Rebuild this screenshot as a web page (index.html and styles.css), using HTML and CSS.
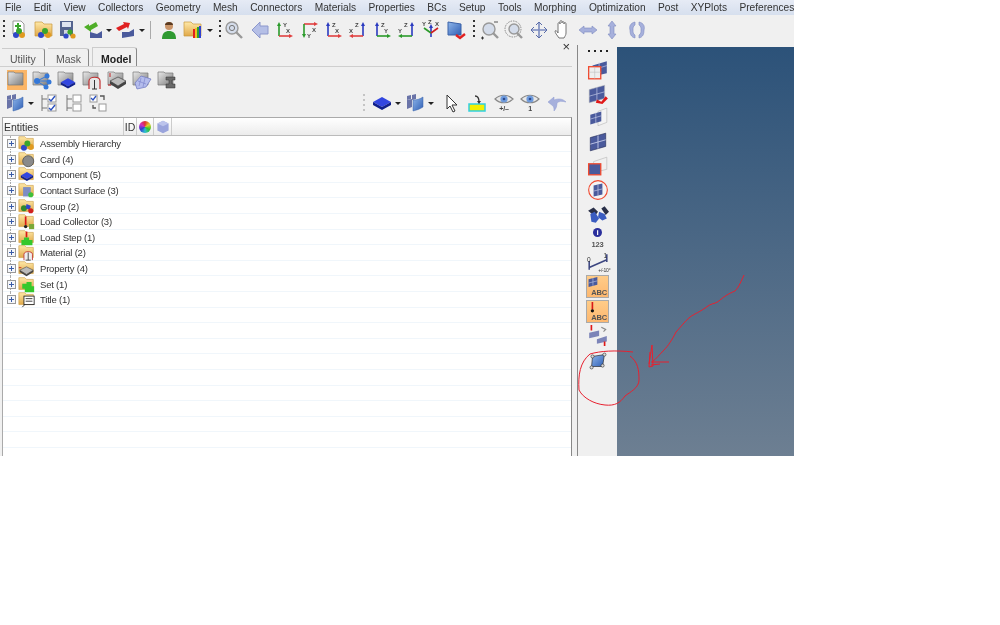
FILE: index.html
```html
<!DOCTYPE html>
<html lang="en">
<head>
    <meta charset="UTF-8">
    <title>HyperMesh</title>
    <link rel="stylesheet" href="styles.css">
</head>
<body>
<svg class="defs" width="0" height="0">
    <defs>
        <linearGradient id="fold" x1="0" y1="0" x2="0" y2="1"><stop offset="0" stop-color="#ffe9a8"/><stop offset="1" stop-color="#e0a848"/></linearGradient>
        <linearGradient id="gfold" x1="0" y1="0" x2="1" y2="1"><stop offset="0" stop-color="#eaeaea"/><stop offset="1" stop-color="#7c7c7c"/></linearGradient>
        <linearGradient id="blue" x1="0" y1="0" x2="1" y2="1"><stop offset="0" stop-color="#8fb6ea"/><stop offset="1" stop-color="#2f5fb5"/></linearGradient>
        <symbol id="folder" viewBox="0 0 20 20"><path d="M1 2h7l2 2h8v12H1z" fill="url(#fold)" stroke="#c99a3c" stroke-width=".7"/></symbol>
        <symbol id="gray" viewBox="0 0 20 20"><path d="M1 2h6l1 1h8v12H1z" fill="url(#gfold)" stroke="#777" stroke-width=".7"/></symbol>
        <symbol id="mesh" viewBox="0 0 20 20"><path d="M3 6l14-4v12L3 18z" fill="#4a5a9c" stroke="#26305c" stroke-width=".6"/><path d="M3 12l14-4M10 4v12" stroke="#c7cdea" stroke-width=".8"/></symbol>
        <symbol id="cube" viewBox="0 0 20 20"><path d="M10 4l9 5-9 5-9-5z" fill="#3246e0"/><path d="M1 9v3l9 5 9-5V9l-9 5z" fill="#10208c"/></symbol>
        <symbol id="panel" viewBox="0 0 20 20"><path d="M2 7l5-1v8l-5 2z" fill="#6a74a8"/><path d="M7 2l4-1v5l-4 1z" fill="#6a74a8"/><path d="M2 3l4-1v4l-4 1z" fill="#6a74a8"/><path d="M8 7c4 0 7-1 10-3v10c-3 2-6 3-10 4z" fill="url(#blue)" stroke="#3b62a8" stroke-width=".5"/></symbol>
        <symbol id="tree-on" viewBox="0 0 20 20"><path d="M4 2v16M4 6h5M4 15h5" fill="none" stroke="#777"/><rect x="10" y="2" width="8" height="7" fill="#fff" stroke="#999"/><rect x="10" y="11" width="8" height="7" fill="#fff" stroke="#999"/><path d="M11 6l2 2 4-5M11 15l2 2 4-5" fill="none" stroke="#2a50c0" stroke-width="1.4"/></symbol>
        <symbol id="tree-off" viewBox="0 0 20 20"><path d="M4 2v16M4 6h5M4 15h5" fill="none" stroke="#777"/><rect x="10" y="2" width="8" height="7" fill="#fff" stroke="#999"/><rect x="10" y="11" width="8" height="7" fill="#fff" stroke="#999"/></symbol>
        <symbol id="eye" viewBox="0 0 20 20"><path d="M1 6c5-5 13-5 18 0-5 5-13 5-18 0z" fill="#e8e8e8" stroke="#888" stroke-width="1.2"/><circle cx="10" cy="6" r="3.6" fill="#6f9bdc"/><circle cx="10" cy="6" r="1.3" fill="#2b4a90"/></symbol>
    </defs>
</svg>

<div class="app">
    <nav class="menubar">
        <span>File</span><span>Edit</span><span>View</span><span>Collectors</span><span>Geometry</span><span>Mesh</span><span>Connectors</span><span>Materials</span><span>Properties</span><span>BCs</span><span>Setup</span><span>Tools</span><span>Morphing</span><span>Optimization</span><span>Post</span><span>XYPlots</span><span>Preferences</span>
    </nav>

    <div class="toolbar">
        <i class="grip"></i>
        <div class="tool"><svg viewBox="0 0 20 20"><path d="M4 1h8l3 3v10H4z" fill="#fff" stroke="#999"/><path d="M8 3h2v2h2v2h-2v2H8V7H6V5h2z" fill="#3aa52c"/><circle cx="7" cy="15" r="3" fill="#2f47c8"/><circle cx="13" cy="15" r="3" fill="#e09a20"/><circle cx="10" cy="11" r="3" fill="#3aa52c"/></svg></div>
        <div class="tool"><svg viewBox="0 0 20 20"><use href="#folder"/><circle cx="7" cy="15" r="3" fill="#2f47c8"/><circle cx="14" cy="15" r="3" fill="#e09a20"/><circle cx="11" cy="11" r="3" fill="#3aa52c"/></svg></div>
        <div class="tool"><svg viewBox="0 0 20 20"><path d="M2 1h13v15H2z" fill="#55648f"/><rect x="4" y="2" width="9" height="5" fill="#dfe4f0"/><rect x="6" y="10" width="6" height="6" fill="#cfd4e0"/><circle cx="8" cy="16" r="2.6" fill="#2f47c8"/><circle cx="15" cy="16" r="2.6" fill="#e09a20"/><circle cx="12" cy="12" r="2.6" fill="#3aa52c"/></svg></div>
        <div class="tool"><svg viewBox="0 0 20 20"><path d="M7 12l7 2 5-3v7H7z" fill="#4a5a9c"/><path d="M1 7l5-3v2l7-4 2 4-7 4v2z" fill="#4fae28"/></svg></div>
        <i class="caret"></i>
        <div class="tool"><svg viewBox="0 0 20 20"><path d="M7 12l7 0 5-3v7l-12 2z" fill="#4a5a9c"/><path d="M1 8l8-4-1-2 7 1-2 6-1-2-8 4z" fill="#e02020"/></svg></div>
        <i class="caret"></i>
        <i class="sep"></i>
        <div class="tool"><svg viewBox="0 0 20 20"><circle cx="10" cy="6" r="4" fill="#c99468"/><path d="M6 5c0-4 8-4 8 0z" fill="#5a3a20"/><path d="M3 19c0-6 3-8 7-8s7 2 7 8z" fill="#2f9a32"/></svg></div>
        <div class="tool"><svg viewBox="0 0 20 20"><use href="#folder"/><path d="M10 9h2v9h-2z" fill="#e02020"/><path d="M12 8h2v10h-2z" fill="#f0c020"/><path d="M14 7h2v11h-2z" fill="#30a030"/><path d="M16 6h2v12h-2z" fill="#3040d0"/></svg></div>
        <i class="caret"></i>
        <i class="grip g2"></i>
        <div class="tool"><svg viewBox="0 0 20 20"><circle cx="8" cy="8" r="6" fill="#d4dcea" stroke="#999" stroke-width="1.4"/><circle cx="8" cy="8" r="2.6" fill="none" stroke="#777"/><path d="M12 12l6 6" stroke="#999" stroke-width="2.4"/></svg></div>
        <div class="tool nudge"><svg viewBox="0 0 20 20"><path d="M2 10l8-8v4h8v8h-8v4z" fill="#b5bfe6" stroke="#8c97cc"/></svg></div>
        <div class="tool"><svg viewBox="0 0 20 20"><path d="M5 4v12" stroke="#2a9a2a" stroke-width="1.6"/><path d="M5 16h12" stroke="#e04040" stroke-width="1.6"/><path d="M3 6l2-4 2 4z" fill="#2a9a2a"/><path d="M15 14l4 2-4 2z" fill="#e04040"/><text x="9" y="7" class="ax-l">Y</text><text x="12" y="13" class="ax-l">X</text></svg></div>
        <div class="tool"><svg viewBox="0 0 20 20"><path d="M5 4h12" stroke="#e04040" stroke-width="1.6"/><path d="M5 4v12" stroke="#2a9a2a" stroke-width="1.6"/><path d="M15 2l4 2-4 2z" fill="#e04040"/><path d="M3 14l2 4 2-4z" fill="#2a9a2a"/><text x="8" y="18" class="ax-l">Y</text><text x="13" y="12" class="ax-l">X</text></svg></div>
        <div class="tool"><svg viewBox="0 0 20 20"><path d="M5 4v12" stroke="#2a3ac0" stroke-width="1.6"/><path d="M5 16h12" stroke="#e04040" stroke-width="1.6"/><path d="M3 6l2-4 2 4z" fill="#2a3ac0"/><path d="M15 14l4 2-4 2z" fill="#e04040"/><text x="9" y="7" class="ax-l">Z</text><text x="12" y="13" class="ax-l">X</text></svg></div>
        <div class="tool"><svg viewBox="0 0 20 20"><path d="M15 4v12" stroke="#2a3ac0" stroke-width="1.6"/><path d="M15 16H3" stroke="#e04040" stroke-width="1.6"/><path d="M13 6l2-4 2 4z" fill="#2a3ac0"/><path d="M5 14l-4 2 4 2z" fill="#e04040"/><text x="7" y="7" class="ax-l">Z</text><text x="1" y="13" class="ax-l">X</text></svg></div>
        <div class="tool"><svg viewBox="0 0 20 20"><path d="M5 4v12" stroke="#2a3ac0" stroke-width="1.6"/><path d="M5 16h12" stroke="#2a9a2a" stroke-width="1.6"/><path d="M3 6l2-4 2 4z" fill="#2a3ac0"/><path d="M15 14l4 2-4 2z" fill="#2a9a2a"/><text x="9" y="7" class="ax-l">Z</text><text x="12" y="13" class="ax-l">Y</text></svg></div>
        <div class="tool"><svg viewBox="0 0 20 20"><path d="M15 4v12" stroke="#2a3ac0" stroke-width="1.6"/><path d="M15 16H3" stroke="#2a9a2a" stroke-width="1.6"/><path d="M13 6l2-4 2 4z" fill="#2a3ac0"/><path d="M5 14l-4 2 4 2z" fill="#2a9a2a"/><text x="7" y="7" class="ax-l">Z</text><text x="1" y="13" class="ax-l">Y</text></svg></div>
        <div class="tool"><svg viewBox="0 0 20 20"><path d="M10 8v9" stroke="#2a3ac0" stroke-width="1.6"/><path d="M10 13L3 8" stroke="#2a9a2a" stroke-width="1.6"/><path d="M10 13l7-5" stroke="#d02020" stroke-width="1.6"/><path d="M8 8l2-4 2 4z" fill="#2a3ac0"/><text x="1" y="6" class="ax-l">Y</text><text x="7" y="4" class="ax-l">Z</text><text x="14" y="6" class="ax-l">X</text></svg></div>
        <div class="tool"><svg viewBox="0 0 20 20"><path d="M2 2l13 2v11L2 15z" fill="url(#blue)" stroke="#3b62a8"/><path d="M10 15l4 3 5-4" fill="none" stroke="#e02020" stroke-width="2.4"/></svg></div>
        <i class="grip g3"></i>
        <div class="tool"><svg viewBox="0 0 20 20"><circle cx="9" cy="9" r="6" fill="#d4dcea" stroke="#999" stroke-width="1.4"/><path d="M13 13l5 5" stroke="#999" stroke-width="2.4"/><path d="M14 2h4" stroke="#555"/><path d="M1 18h3M2.5 16.5v3" stroke="#333"/></svg></div>
        <div class="tool"><svg viewBox="0 0 20 20"><circle cx="9" cy="9" r="8" fill="none" stroke="#888" stroke-dasharray="1.5 1"/><circle cx="10" cy="9" r="5" fill="#d4dcea" stroke="#999" stroke-width="1.4"/><path d="M13 13l5 5" stroke="#999" stroke-width="2.4"/></svg></div>
        <div class="tool"><svg viewBox="0 0 20 20"><path d="M10 2v16M2 10h16" stroke="#7c8cc0" stroke-width="1.6"/><path d="M7 5l3-3 3 3M7 15l3 3 3-3M5 7l-3 3 3 3M15 7l3 3-3 3" fill="none" stroke="#5a6ca8"/></svg></div>
        <div class="tool"><svg viewBox="0 0 20 20"><path d="M6 18c-2-3-4-5-4-7 1-1 2 0 3 2V4c0-2 2-2 2 0V2c0-2 2-2 2 0v1c0-2 2-2 2 0v1c0-2 2-2 2 0v9c0 2-1 3-2 5z" fill="#fff" stroke="#666" stroke-width=".9"/></svg></div>
        <div class="tool"><svg viewBox="0 0 20 20"><path d="M1 10l5-4v2h8V6l5 4-5 4v-2H6v2z" fill="#a6b0dc" stroke="#7d89c0" stroke-width=".6"/></svg></div>
        <div class="tool"><svg viewBox="0 0 20 20"><path d="M10 1l4 5h-2v8h2l-4 5-4-5h2V6H6z" fill="#a6b0dc" stroke="#7d89c0" stroke-width=".6"/></svg></div>
        <div class="tool"><svg viewBox="0 0 20 20"><path d="M8 2C3 3 2 7 3 10c0 4 1 7 5 8v-3c-2-1-2-3-2-5s0-4 2-5zM12 2c5 1 6 5 5 8 0 4-1 7-5 8v-3c2-1 2-3 2-5s0-4-2-5z" fill="#a6b0dc" stroke="#7d89c0" stroke-width=".6"/></svg></div>
    </div>

    <div class="workspace">
        <section class="left">
            <div class="tabs">
                <span class="tab t-utility">Utility</span>
                <span class="tab t-mask">Mask</span>
                <span class="tab t-model active">Model</span>
                <span class="close">&#215;</span>
            </div>
            <div class="panel-tools">
                <div class="icon-row">
                    <div class="pbtn on"><svg viewBox="0 0 20 20"><use href="#gray"/></svg></div>
                    <div class="pbtn"><svg viewBox="0 0 20 20"><use href="#gray"/><circle cx="5" cy="11" r="3" fill="#3478d8"/><circle cx="15" cy="6" r="2.5" fill="#3478d8"/><circle cx="17" cy="12" r="2.5" fill="#3478d8"/><circle cx="14" cy="17" r="2.5" fill="#3478d8"/><path d="M5 11l10-5M5 11h12M5 11l9 6" stroke="#3478d8"/></svg></div>
                    <div class="pbtn"><svg viewBox="0 0 20 20"><use href="#gray"/><use href="#cube" x="2" y="5" width="18" height="16"/></svg></div>
                    <div class="pbtn"><svg viewBox="0 0 20 20"><use href="#gray"/><path d="M7 19V11c0-5 11-5 11 0v8" fill="#e8e8e8" stroke="#c03030" stroke-width="1.2"/><path d="M10 19h5M12.5 10v9" stroke="#333"/></svg></div>
                    <div class="pbtn"><svg viewBox="0 0 20 20"><use href="#gray"/><path d="M11 7l8 4-8 5-8-5z" fill="#bbb" stroke="#333" stroke-width=".6"/><path d="M3 11v3l8 5 8-5v-3l-8 5z" fill="#444"/><path d="M3 3v4M1 15h3" stroke="#c02020"/></svg></div>
                    <div class="pbtn"><svg viewBox="0 0 20 20"><use href="#gray"/><path d="M3 13l6-7 10 3-5 8-9 2z" fill="#b4bcec" stroke="#6a74c0" stroke-width=".7"/><path d="M6 11l8 3M9 8l-2 8M13 8l-2 9" stroke="#6a74c0" stroke-width=".5"/></svg></div>
                    <div class="pbtn"><svg viewBox="0 0 20 20"><use href="#gray"/><path d="M9 7h9v3h-3v4h3v4H9v-4h3v-4H9z" fill="#6a6a6a" stroke="#333" stroke-width=".5"/></svg></div>
                </div>
                <div class="icon-row second">
                    <div class="pbtn"><svg viewBox="0 0 20 20"><use href="#panel"/></svg></div>
                    <i class="caret"></i>
                    <div class="pbtn"><svg viewBox="0 0 20 20"><use href="#tree-on"/></svg></div>
                    <div class="pbtn"><svg viewBox="0 0 20 20"><use href="#tree-off"/></svg></div>
                    <div class="pbtn"><svg viewBox="0 0 20 20"><rect x="2" y="2" width="7" height="7" fill="#fff" stroke="#999"/><path d="M3 5l2 2 3-4" fill="none" stroke="#2a50c0" stroke-width="1.3"/><rect x="11" y="11" width="7" height="7" fill="#fff" stroke="#999"/><path d="M12 3l4 0 0 4M8 15l-3 0 0-3" fill="none" stroke="#555" stroke-width="1.3"/></svg></div>
                    <div class="spacer"></div>
                    <i class="grip g4"></i>
                    <div class="pbtn"><svg viewBox="0 0 20 20"><use href="#cube"/></svg></div>
                    <i class="caret"></i>
                    <div class="pbtn"><svg viewBox="0 0 20 20"><use href="#panel"/></svg></div>
                    <i class="caret"></i>
                    <div class="pbtn arrow"><svg viewBox="0 0 20 20"><path d="M5 2v14l3-3 3 6 2-1-3-6h5z" fill="#fff" stroke="#333" stroke-width="1"/></svg></div>
                    <div class="pbtn wide"><svg viewBox="0 0 20 20"><rect x="2" y="11" width="16" height="7" fill="#f4f000" stroke="#30d0e0" stroke-width="1.5"/><path d="M8 3c3 0 4 2 4 6" fill="none" stroke="#333" stroke-width="1.3"/><path d="M10 8h4l-2 3z" fill="#333"/></svg></div>
                    <div class="pbtn wide"><svg viewBox="0 0 20 20"><use href="#eye"/><text x="10" y="18" class="eye-l">+/&#8211;</text></svg></div>
                    <div class="pbtn wide"><svg viewBox="0 0 20 20"><use href="#eye"/><text x="10" y="18" class="eye-l">1</text></svg></div>
                    <div class="pbtn wide"><svg viewBox="0 0 20 20"><path d="M1 9l6-5v3c5-2 9-1 12 2-4-1-7-1-9 1 0 3-1 6-3 8 0-2 0-4-1-5z" fill="#a6b0dc" stroke="#8f9ad0" stroke-width=".5"/></svg></div>
                </div>
            </div>

            <div class="entities">
                <div class="ent-head">
                    <span class="ent-name">Entities</span>
                    <span class="ent-col c-id">ID</span>
                    <span class="ent-col c-color"><i class="wheel"></i></span>
                    <span class="ent-col c-solid"><svg viewBox="0 0 20 20"><path d="M10 1l8 4v10l-8 4-8-4V5z" fill="#9aa4dc"/><path d="M10 1l8 4-8 4-8-4z" fill="#bcc4ec"/></svg></span>
                    <span class="ent-fill"></span>
                </div>
                <ul class="tree">
                    <li><i class="exp"></i><svg viewBox="0 0 20 20"><use href="#folder"/><circle cx="7" cy="15" r="3.5" fill="#2f47c8"/><circle cx="15" cy="14" r="3.5" fill="#e09a20"/><circle cx="11" cy="10" r="3.5" fill="#3aa52c"/></svg>Assembly Hierarchy</li>
                    <li><i class="exp"></i><svg viewBox="0 0 20 20"><use href="#folder"/><circle cx="12" cy="12" r="6.5" fill="#8a8a8a" stroke="#555"/></svg>Card (4)</li>
                    <li><i class="exp"></i><svg viewBox="0 0 20 20"><use href="#folder"/><use href="#cube" x="1" y="4" width="19" height="16"/></svg>Component (5)</li>
                    <li><i class="exp"></i><svg viewBox="0 0 20 20"><use href="#folder"/><rect x="6" y="6" width="9" height="11" fill="#7d8cc4"/><circle cx="15" cy="15" r="3" fill="#3fc03a"/></svg>Contact Surface (3)</li>
                    <li><i class="exp"></i><svg viewBox="0 0 20 20"><use href="#folder"/><circle cx="7" cy="12" r="3.5" fill="#2f8a2c"/><path d="M10 7l5 2-1 5-5-2z" fill="#2f47c8"/><circle cx="15" cy="15" r="3" fill="#d02020"/></svg>Group (2)</li>
                    <li><i class="exp"></i><svg viewBox="0 0 20 20"><use href="#folder"/><path d="M9 4v10" stroke="#d81818" stroke-width="2"/><circle cx="9" cy="16" r="2" fill="#222"/><rect x="13" y="13" width="6" height="6" fill="#78a838"/></svg>Load Collector (3)</li>
                    <li><i class="exp"></i><svg viewBox="0 0 20 20"><use href="#folder"/><path d="M10 3v7" stroke="#d81818" stroke-width="2"/><path d="M7 10h6v3h4v6H4v-6h3z" fill="#35c82c"/></svg>Load Step (1)</li>
                    <li><i class="exp"></i><svg viewBox="0 0 20 20"><use href="#folder"/><path d="M7 19v-7c0-4 10-4 10 0v7" fill="#eee" stroke="#c03030"/><path d="M9 19h6M12 10v9" stroke="#333"/></svg>Material (2)</li>
                    <li><i class="exp"></i><svg viewBox="0 0 20 20"><use href="#folder"/><path d="M10 8l8 4-8 5-8-5z" fill="#bbb" stroke="#333" stroke-width=".6"/><path d="M2 12v2l8 5 8-5v-2l-8 5z" fill="#444"/><path d="M1 9h3" stroke="#c02020"/></svg>Property (4)</li>
                    <li><i class="exp"></i><svg viewBox="0 0 20 20"><use href="#folder"/><path d="M10 7h6v5h3v7H8v-4H5v-6h5z" fill="#35c82c"/></svg>Set (1)</li>
                    <li><i class="exp"></i><svg viewBox="0 0 20 20"><use href="#folder"/><rect x="7" y="6" width="12" height="10" fill="#fff" stroke="#222"/><path d="M9 9h8M9 12h8" stroke="#222"/><path d="M8 16l-3 3" stroke="#222"/></svg>Title (1)</li>
                </ul>
            </div>
        </section>

        <aside class="side">
            <i class="dots"></i>
            <div class="sbtn"><svg viewBox="0 0 20 20"><path d="M5 6l13-4v11L5 16z" fill="#4a5a9c"/><path d="M11 3v12M5 10l13-4" stroke="#c7cdea" stroke-width=".6"/><rect x="1.5" y="7" width="11" height="11" fill="#eee" stroke="#f04a30" stroke-width="1.2"/><path d="M1.5 12h11M7 7v11" stroke="#bbb" stroke-width=".5"/></svg></div>
            <div class="sbtn"><svg viewBox="0 0 20 20"><path d="M2 6l14-4v12L2 18z" fill="#4a5a9c" stroke="#bbb" stroke-width=".5"/><path d="M9 4v12M2 12l14-4" stroke="#c7cdea" stroke-width=".6"/><path d="M9 15l4 2 4-5 2 2-5 5-6-1z" fill="#e01818"/></svg></div>
            <div class="sbtn"><svg viewBox="0 0 20 20"><path d="M10 4l8-3v13l-8 3z" fill="#f4f4f4" stroke="#bbb" stroke-width=".6"/><path d="M3 7l10-3v9L3 16z" fill="#4a5a9c"/><path d="M8 5v10M3 11l10-3" stroke="#c7cdea" stroke-width=".6"/></svg></div>
            <div class="sbtn"><svg viewBox="0 0 20 20"><use href="#mesh"/></svg></div>
            <div class="sbtn"><svg viewBox="0 0 20 20"><path d="M6 6l12-4v11L6 16z" fill="#f0f0f0" stroke="#bbb" stroke-width=".6"/><rect x="1.5" y="8" width="11" height="10" fill="#4a5a9c" stroke="#f04a30" stroke-width="1.2"/></svg></div>
            <div class="sbtn"><svg viewBox="0 0 20 20"><circle cx="10" cy="10" r="8.5" fill="#f4f4f4" stroke="#f04a30" stroke-width="1"/><path d="M6 6l8-2v10l-8 2z" fill="#4a5a9c"/><path d="M10 5v10M6 11l8-2" stroke="#c7cdea" stroke-width=".6"/></svg></div>
            <div class="sbtn"><svg viewBox="0 0 20 20"><path d="M1 7l5-3 4 4-3 4zM13 5l3-2 4 5-3 3z" fill="#2a3048"/><path d="M3 10l4-2 4 6-3 4-4-1z" fill="#3a5cc0"/><path d="M11 8l5 2 2 4-4 2-4-3z" fill="#3a5cc0"/></svg></div>
            <div class="sbtn info"><i class="info-dot">i</i><b>123</b></div>
            <div class="sbtn"><svg viewBox="0 0 20 20"><path d="M2 9v8M18 3v7M2 15l16-7" fill="none" stroke="#3c4680" stroke-width="1.4"/><text x="0" y="6" class="g-l">0</text><text x="15" y="2" class="g-l">1</text></svg><span class="deg">+/-10&#176;</span></div>
            <div class="abc"><svg viewBox="0 0 20 20"><path d="M1 4l16-4v14L1 18z" fill="#4a5a9c"/><path d="M9 2v14M1 11l16-4" stroke="#c7cdea" stroke-width="1"/></svg><b>ABC</b></div>
            <div class="abc"><svg viewBox="0 0 20 20"><path d="M8 0v14" stroke="#d81818" stroke-width="3"/><circle cx="8" cy="16" r="3" fill="#111"/></svg><b>ABC</b></div>
            <div class="sbtn"><svg viewBox="0 0 20 20"><path d="M2 7l9-2v5l-9 2zM9 13l9-3v5l-9 2z" fill="#7c84b8"/><path d="M4 0v5M16 15v4" stroke="#e01818" stroke-width="1.5"/><path d="M13 2l4 2-2 2" fill="none" stroke="#888"/></svg></div>
            <div class="sbtn"><svg viewBox="-2 -2 24 24"><path d="M4 5l13-2-2 13-12 0z" fill="url(#blue)" stroke="#222" stroke-width=".7"/><circle cx="4" cy="5" r="1.7" fill="#ddd" stroke="#333" stroke-width=".7"/><circle cx="17" cy="3" r="1.7" fill="#ddd" stroke="#333" stroke-width=".7"/><circle cx="15" cy="15" r="1.7" fill="#ddd" stroke="#333" stroke-width=".7"/><circle cx="3" cy="17" r="1.7" fill="#ddd" stroke="#333" stroke-width=".7"/></svg></div>
        </aside>

        <main class="viewport"></main>
    </div>

    <!-- red pen marks someone drew on top of the screenshot -->
    <svg class="marks" viewBox="0 0 794 456">
        <path d="M633 352C615 350 600 351 590 354 580 362 578 375 579 390 583 398 594 404 605 405 615 406 620 403 625 396 630 392 639 388 639 380 639 370 638 362 630 356"/>
        <path d="M744 275C740 284 738 288 735 291 728 294 725 296 720 300 716 304 712 303 708 306 700 312 694 314 690 317 684 322 680 328 676 332 672 340 668 346 664 350 660 354 656 359 652 362M649 364L652 345 653 366 649 367 650 352M651 362L669 362M651 365L660 364"/>
    </svg>
</div>
</body>
</html>
```
FILE: styles.css
```css
html, body {
    margin: 0;
    background-color: #ffffff;
}
body {
    font-family: "Liberation Sans", Tahoma, sans-serif;
    font-size: 9.5px;
    letter-spacing: -0.2px;
    color: #333;
}
.defs {
    position: absolute;
}
svg {
    display: block;
}
.app {
    position: relative;
    width: 794px;
    height: 456px;
    display: flex;
    flex-direction: column;
    background-color: #f0f0f0;
    filter: blur(0.3px);
    overflow: hidden;
}

/* menu */
.menubar {
    display: flex;
    gap: 12.4px;
    height: 15px;
    padding-left: 5px;
    align-items: center;
    background: linear-gradient(#e6ebf5, #d6dfee);
    font-size: 10.2px;
    letter-spacing: 0;
    white-space: nowrap;
}

/* main toolbar */
.toolbar {
    display: flex;
    align-items: center;
    height: 30px;
    padding-left: 3px;
    background-color: #f0f0f0;
}
.tool {
    width: 24.5px;
    display: flex;
    justify-content: center;
}
.tool svg {
    width: 20px;
    height: 20px;
}
.tool.nudge {
    margin-left: 1px;
}
.ax-l {
    font: bold 6px "Liberation Sans", sans-serif;
    fill: #444;
}
.grip {
    width: 2px;
    height: 20px;
    margin-right: 2px;
    background: repeating-linear-gradient(#333 0 2px, transparent 2px 5px);
}
.g2 { margin-left: 5px; margin-right: 1.5px; }
.g3 { margin-left: 5px; margin-right: 2.5px; }
.g4 {
    height: 18px;
    margin-right: 4px;
    background: repeating-linear-gradient(#c4c4c4 0 2px, transparent 2px 5px);
}
.caret {
    width: 0;
    height: 0;
    margin: 0 1px;
    border-left: 3px solid transparent;
    border-right: 3px solid transparent;
    border-top: 3px solid #222;
}
.sep {
    width: 1px;
    height: 18px;
    margin-left: 4px;
    margin-right: 6px;
    background-color: #aaa;
}

/* layout */
.workspace {
    flex: 1;
    display: flex;
    min-height: 0;
}
.left {
    width: 572px;
    display: flex;
    flex-direction: column;
    margin-top: 1px;
    border-right: 1px solid #f0f0f0;
}

/* tabs */
.tabs {
    position: relative;
    display: flex;
    align-items: flex-end;
    gap: 3px;
    height: 20px;
    padding-left: 2px;
    border-bottom: 1px solid #cfcfcf;
}
.tab {
    box-sizing: border-box;
    height: 18px;
    padding-left: 8px;
    line-height: 21px;
    border-top: 1px solid #ccc;
    border-right: 1px solid #888;
    border-radius: 0 3px 0 0;
    font-size: 10.5px;
    letter-spacing: 0;
    color: #555;
}
.t-utility { width: 43px; }
.t-mask { width: 41px; }
.t-model { width: 45px; }
.tab.active {
    height: 19px;
    border-left: 1px solid #ccc;
    line-height: 22px;
    font-weight: 700;
    color: #222;
}
.close {
    position: absolute;
    right: 2px;
    top: -7px;
    font: 13px "Liberation Sans", sans-serif;
    color: #333;
}

/* panel icons */
.panel-tools {
    height: 50px;
    padding-top: 3px;
    box-sizing: border-box;
}
.icon-row {
    display: flex;
    align-items: center;
    height: 20px;
    padding-left: 7px;
}
.icon-row.second {
    margin-top: 3px;
    padding-left: 2px;
    padding-right: 2px;
}
.pbtn {
    width: 25px;
    height: 20px;
    display: flex;
    justify-content: center;
    flex: none;
}
.icon-row:first-child .pbtn {
    justify-content: flex-start;
}
.pbtn svg {
    width: 20px;
    height: 20px;
}
.pbtn.on svg {
    background-color: #fbb566;
}
.spacer {
    flex: 1;
}
.pbtn.arrow {
    margin-left: 4px;
}
.pbtn.wide {
    width: 26.5px;
}
.eye-l {
    font: bold 7px "Liberation Sans", sans-serif;
    text-anchor: middle;
    fill: #444;
}

/* entities table */
.entities {
    flex: 1;
    min-height: 0;
    margin-left: 2px;
    display: flex;
    flex-direction: column;
    background-color: #fff;
    border-left: 1px solid #aaa;
    border-right: 1px solid #888;
    border-top: 1px solid #aaa;
}
.ent-head {
    display: flex;
    height: 17px;
    flex: none;
    align-items: center;
    background: linear-gradient(#fff, #ececec);
    border-bottom: 1px solid #bbb;
    font-size: 10.5px;
    letter-spacing: 0;
}
.ent-name {
    width: 120px;
    padding-left: 1px;
    box-sizing: border-box;
}
.ent-col {
    box-sizing: border-box;
    height: 100%;
    display: flex;
    align-items: center;
    justify-content: center;
    border-left: 1px solid #ccc;
}
.c-id { width: 13px; }
.c-color { width: 17px; }
.c-solid { width: 18px; }
.ent-col svg {
    width: 14px;
    height: 14px;
}
.ent-fill {
    flex: 1;
    height: 100%;
    border-left: 1px solid #ccc;
}
.wheel {
    width: 12px;
    height: 12px;
    border-radius: 50%;
    background: conic-gradient(#e03030, #e0d030, #30c030, #30c0d0, #3040d0, #d030c0, #e03030);
}
.tree {
    flex: 1;
    margin: 0;
    padding: 0;
    list-style: none;
    background: repeating-linear-gradient(transparent 0 14.6px, #f0f6fb 14.6px 15.6px);
}
.tree li {
    position: relative;
    display: flex;
    align-items: center;
    height: 15.6px;
    padding-left: 4px;
    white-space: nowrap;
}
.tree li::before {
    content: "";
    position: absolute;
    left: 7px;
    top: 0;
    height: 100%;
    border-left: 1px dotted #aaa;
}
.tree li:last-child::before {
    height: 50%;
}
.tree svg {
    width: 17px;
    height: 17px;
    flex: none;
    margin-left: 2px;
    margin-right: 5px;
}
.exp {
    position: relative;
    z-index: 1;
    box-sizing: border-box;
    width: 9px;
    height: 9px;
    flex: none;
    border: 1px solid #999;
    background: linear-gradient(#3a5ca8, #3a5ca8) center / 5px 1px no-repeat,
                linear-gradient(#3a5ca8, #3a5ca8) center / 1px 5px no-repeat,
                #f4f6fa;
}

/* vertical toolbar */
.side {
    width: 39px;
    margin-left: 4px;
    display: flex;
    flex-direction: column;
    align-items: center;
    border-left: 1px solid #888;
    padding-top: 5px;
}
.dots {
    width: 20px;
    height: 2px;
    flex: none;
    background: repeating-linear-gradient(90deg, #222 0 2px, transparent 2px 6px);
}
.sbtn {
    position: relative;
    width: 22px;
    height: 24px;
    display: flex;
    flex-direction: column;
    justify-content: center;
    align-items: center;
    flex: none;
}
.side > .dots + .sbtn {
    margin-top: 6px;
}
.sbtn svg {
    width: 22px;
    height: 22px;
    flex: none;
}
.g-l {
    font: 6px "Liberation Sans", sans-serif;
    fill: #333;
    dominant-baseline: hanging;
}
.deg {
    position: absolute;
    right: -2px;
    bottom: 1px;
    font: 5px "Liberation Sans", sans-serif;
}
.info-dot {
    width: 9px;
    height: 9px;
    border-radius: 50%;
    background-color: #2a2f9c;
    color: #fff;
    font: bold 8px/9px "Liberation Sans", sans-serif;
    text-align: center;
}
.info b {
    margin-top: 3px;
    font: bold 7.5px "Liberation Sans", sans-serif;
    color: #555;
}
.abc {
    position: relative;
    width: 23px;
    height: 23px;
    margin-bottom: 2px;
    box-sizing: border-box;
    border: 1px solid #aaa;
    background: linear-gradient(#ffcc88, #fdb870);
    flex: none;
}
.sbtn + .abc {
    margin-top: 1px;
}
.abc svg {
    width: 11px;
    height: 11px;
    margin: 1px;
}
.abc b {
    position: absolute;
    right: 1px;
    bottom: 0;
    font: bold 7.5px "Liberation Sans", sans-serif;
    color: #555;
}
.abc + .sbtn {
    margin-top: -1px;
}
.abc + .sbtn + .sbtn {
    margin-top: 1px;
}

/* graphics area */
.viewport {
    flex: 1;
    margin-top: 2px;
    background: linear-gradient(#2c5279, #6d7f92);
}
.marks {
    position: absolute;
    left: 0;
    top: 0;
    width: 794px;
    height: 456px;
    fill: none;
    stroke: #e8202f;
    stroke-width: 1;
    pointer-events: none;
}
```
